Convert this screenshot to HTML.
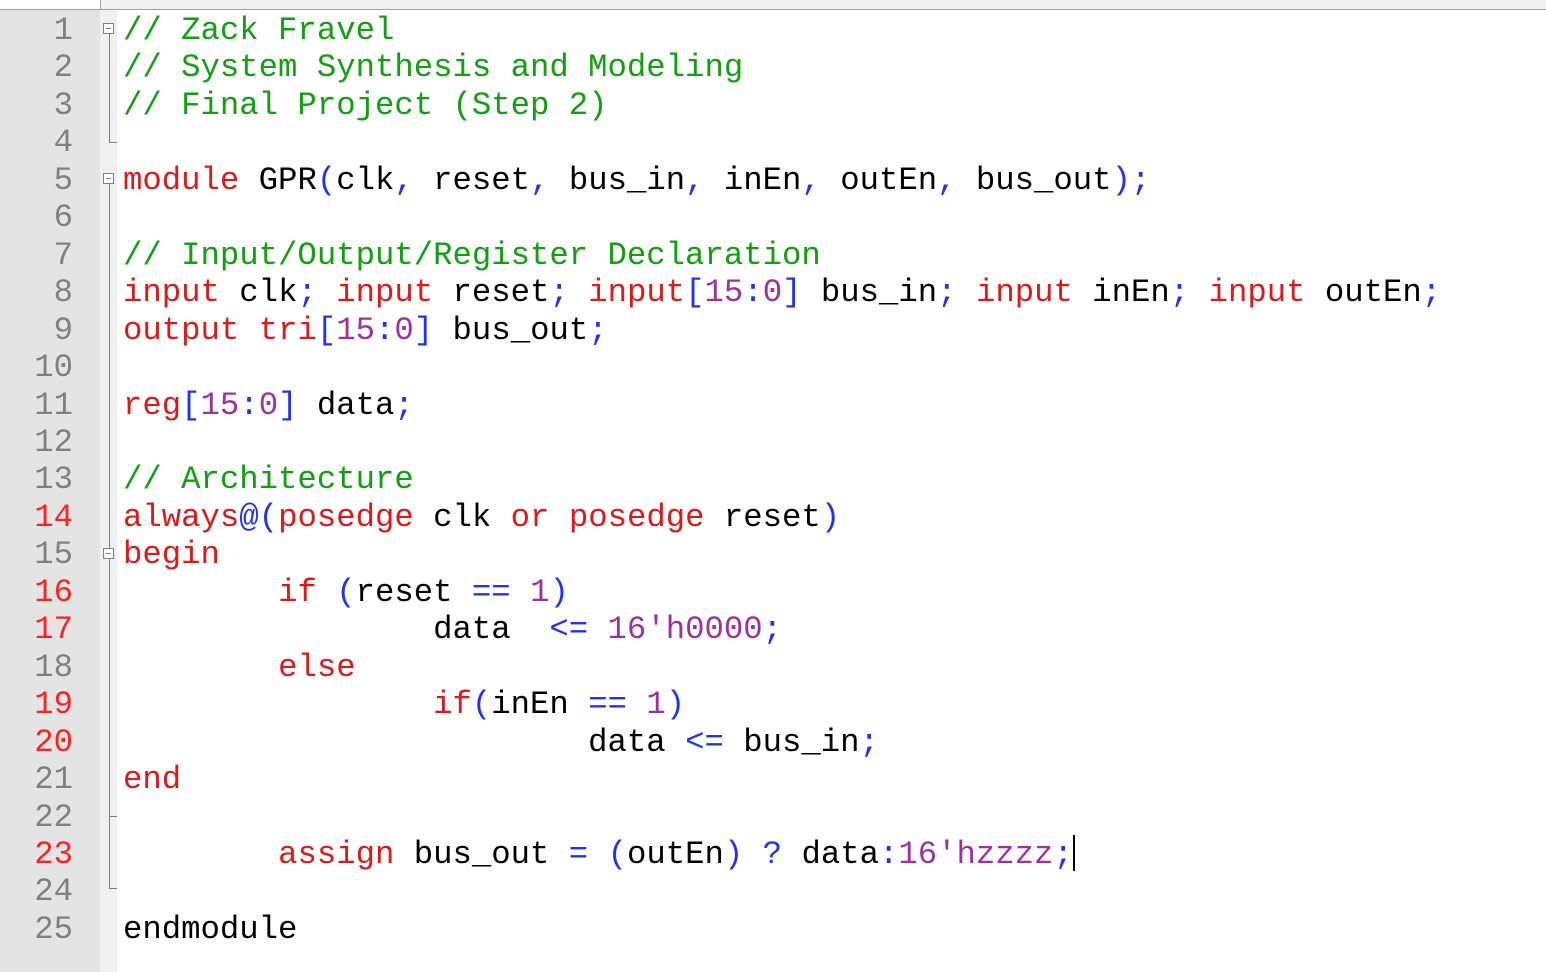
<!DOCTYPE html>
<html><head><style>
body{margin:0;width:1546px;height:972px;overflow:hidden;background:#fff;position:relative;font-family:"Courier New","Liberation Mono",monospace;}
#top{position:absolute;left:0;top:0;width:1546px;height:9px;background:#f0f0f0;border-bottom:1px solid #a0a0a0}
#tab{position:absolute;left:0;top:0;width:100px;height:9px;border-right:1px solid #a0a0a0;background:#fff}
#gut{position:absolute;left:0;top:10px;width:100px;height:962px;background:#e4e4e4}
#fold{position:absolute;left:100px;top:10px;width:17px;height:962px;background:#f0f0f0}
.ln{position:relative;left:0;width:73px;text-align:right;font-size:32.3px;color:#808080;line-height:37.46px}
.r{color:#ff2020}
.code{position:absolute;left:123px;top:12px;font-size:32.3px;line-height:37.46px;white-space:pre;color:#000}
.c{color:#10a010}.k{color:#e01818}.o{color:#2030ff}.n{color:#a030a0}
.v{position:absolute;width:1px;background:#808080}
.h{position:absolute;height:1px;background:#808080}
.box{position:absolute;left:103px;width:11px;height:11px;border:1px solid #808080;background:#fff;box-sizing:border-box}
.box:after{content:"";position:absolute;left:2px;top:4px;width:5px;height:1px;background:#808080}
#caret{position:absolute;left:1073px;top:835px;width:2px;height:36px;background:#000}
</style></head><body>
<div id="top"><div id="tab"></div></div>
<div id="gut"></div><div id="fold"></div>
<div style="position:absolute;top:12px;left:0">
<div class="ln">1</div><div class="ln">2</div><div class="ln">3</div><div class="ln">4</div><div class="ln">5</div><div class="ln">6</div><div class="ln">7</div><div class="ln">8</div><div class="ln">9</div><div class="ln">10</div><div class="ln">11</div><div class="ln">12</div><div class="ln">13</div><div class="ln r">14</div><div class="ln">15</div><div class="ln r">16</div><div class="ln r">17</div><div class="ln">18</div><div class="ln r">19</div><div class="ln r">20</div><div class="ln">21</div><div class="ln">22</div><div class="ln r">23</div><div class="ln">24</div><div class="ln">25</div>
</div>
<div class="v" style="left:109px;top:33px;height:110px"></div><div class="h" style="left:109px;top:142px;width:8px"></div>
<div class="v" style="left:109px;top:183px;height:706px"></div><div class="h" style="left:109px;top:816px;width:8px"></div><div class="h" style="left:109px;top:888px;width:8px"></div>
<div class="box" style="top:23px"></div><div class="box" style="top:173px"></div><div class="box" style="top:548px"></div>
<div class="code"><span class="c">// Zack Fravel</span>
<span class="c">// System Synthesis and Modeling</span>
<span class="c">// Final Project (Step 2)</span>

<span class="k">module</span> GPR<span class="o">(</span>clk<span class="o">,</span> reset<span class="o">,</span> bus_in<span class="o">,</span> inEn<span class="o">,</span> outEn<span class="o">,</span> bus_out<span class="o">);</span>

<span class="c">// Input/Output/Register Declaration</span>
<span class="k">input</span> clk<span class="o">;</span> <span class="k">input</span> reset<span class="o">;</span> <span class="k">input</span><span class="o">[</span><span class="n">15</span><span class="o">:</span><span class="n">0</span><span class="o">]</span> bus_in<span class="o">;</span> <span class="k">input</span> inEn<span class="o">;</span> <span class="k">input</span> outEn<span class="o">;</span>
<span class="k">output</span> <span class="k">tri</span><span class="o">[</span><span class="n">15</span><span class="o">:</span><span class="n">0</span><span class="o">]</span> bus_out<span class="o">;</span>

<span class="k">reg</span><span class="o">[</span><span class="n">15</span><span class="o">:</span><span class="n">0</span><span class="o">]</span> data<span class="o">;</span>

<span class="c">// Architecture</span>
<span class="k">always</span><span class="o">@(</span><span class="k">posedge</span> clk <span class="k">or</span> <span class="k">posedge</span> reset<span class="o">)</span>
<span class="k">begin</span>
        <span class="k">if</span> <span class="o">(</span>reset <span class="o">==</span> <span class="n">1</span><span class="o">)</span>
                data  <span class="o">&lt;=</span> <span class="n">16'h0000</span><span class="o">;</span>
        <span class="k">else</span>
                <span class="k">if</span><span class="o">(</span>inEn <span class="o">==</span> <span class="n">1</span><span class="o">)</span>
                        data <span class="o">&lt;=</span> bus_in<span class="o">;</span>
<span class="k">end</span>

        <span class="k">assign</span> bus_out <span class="o">=</span> <span class="o">(</span>outEn<span class="o">)</span> <span class="o">?</span> data<span class="o">:</span><span class="n">16'hzzzz</span><span class="o">;</span>

endmodule</div>
<div id="caret"></div>
</body></html>
